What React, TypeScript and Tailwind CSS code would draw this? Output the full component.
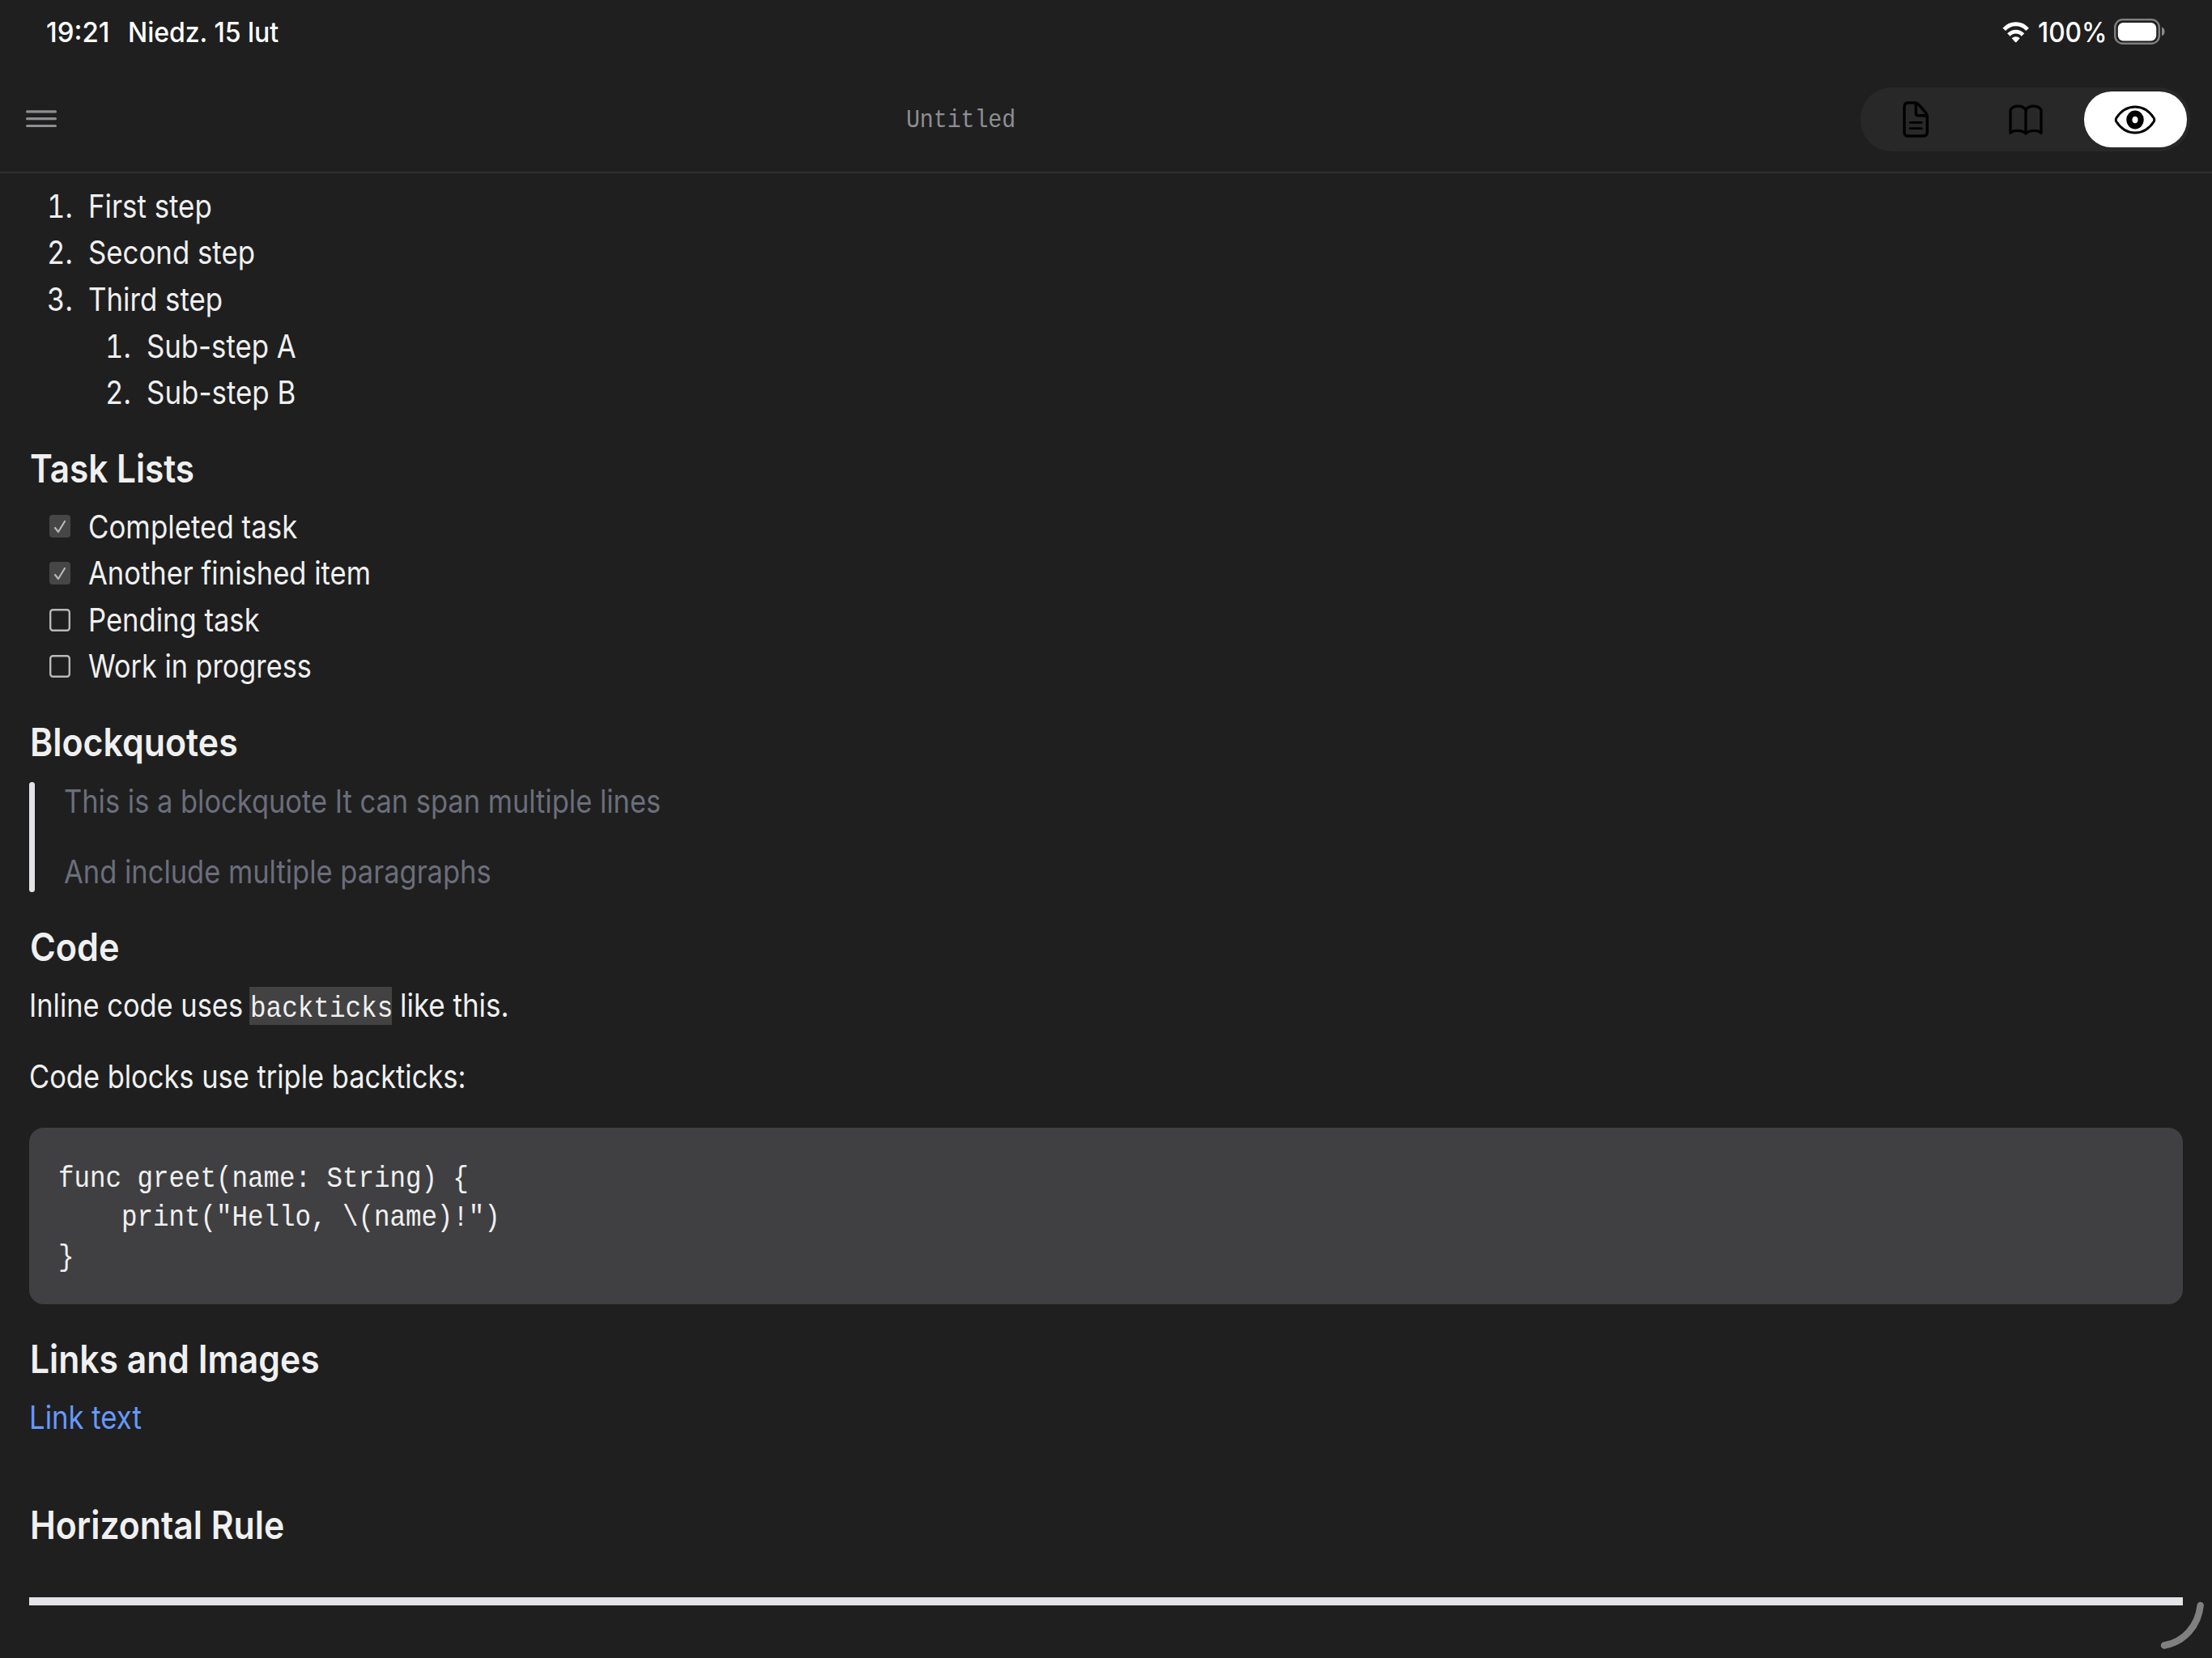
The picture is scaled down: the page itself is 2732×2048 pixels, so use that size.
import type { ReactNode } from "react";

/* Horizontally condensed run of text; the caller passes the scale class. */
function T({ className, children }: { className: string; children: ReactNode }) {
  return <span className={`inline-block origin-left whitespace-pre ${className}`}>{children}</span>;
}

function Heading({ className, scale, children }: { className: string; scale: string; children: ReactNode }) {
  return (
    <h2 className={`pl-[0.6px] text-[48px] leading-[58px] font-semibold ${className}`}>
      <T className={scale}>{children}</T>
    </h2>
  );
}

function Step({ n, scale, children }: { n: string; scale: string; children: ReactNode }) {
  return (
    <li className="flex h-[57.6px] items-center leading-[57.6px]">
      <span className="w-[50.8px] shrink-0 tabular-nums">
        <T className="scale-x-[0.885]">{n}</T>
      </span>
      <T className={scale}>{children}</T>
    </li>
  );
}

function Task({ done, scale, children }: { done?: boolean; scale: string; children: ReactNode }) {
  return (
    <li className="flex h-[57.6px] items-center leading-[57.6px]">
      <span className="mr-[22px] ml-[2.8px] flex shrink-0">
        {done ? (
          <svg width="26" height="28" viewBox="0 0 26 28" fill="none">
            <rect width="26" height="28" rx="4" fill="#464646" />
            <path d="M7 16l4 5L19 8" stroke="#b8b8b8" strokeWidth="2.2" strokeLinecap="round" strokeLinejoin="round" />
          </svg>
        ) : (
          <svg width="26" height="28" viewBox="0 0 26 28" fill="none">
            <rect x="1.2" y="1.2" width="23.6" height="25.6" rx="3.2" stroke="#b8b8b8" strokeWidth="2.4" />
          </svg>
        )}
      </span>
      <T className={scale}>{children}</T>
    </li>
  );
}

function StatusBar() {
  return (
    <div className="flex h-20 items-start pt-4 pl-[57px] text-[34px] leading-[48px] font-[450] text-white">
      <span className="w-[101px]">
        <T className="scale-x-[0.97]">19:21</T>
      </span>
      <T className="scale-x-[0.94]">Niedz. 15 lut</T>
      <div className="mr-[58px] ml-auto flex">
        <svg className="mt-[11px] mr-[10.5px]" width="34" height="26" viewBox="0 0 34 26" fill="none">
          <path d="M2.3 9.4C10.2 .6 23.2 .6 31.1 9.4" stroke="#fff" strokeWidth="5" />
          <path d="M7.9 16C12.7 10.8 20.7 10.8 25.5 16" stroke="#fff" strokeWidth="4.8" />
          <path d="M11.7 20.3C14.3 17.4 19.1 17.4 21.7 20.3L17.5 24.9Q16.7 25.6 15.9 24.9Z" fill="#fff" />
        </svg>
        <span className="w-[94px]">
          <T className="scale-x-[0.932]">100%</T>
        </span>
        <svg className="mt-[7px]" width="63" height="32" viewBox="0 0 63 32" fill="none">
          <rect x="1.2" y="1.2" width="54.6" height="29.6" rx="9.5" stroke="#7f7f7f" strokeWidth="2.4" />
          <rect x="4.8" y="5" width="47.4" height="22.4" rx="6.5" fill="#fff" />
          <path d="M59 10.5C63.8 12.3 63.8 19.7 59 21.5Z" fill="#8a8a8a" />
        </svg>
      </div>
    </div>
  );
}

function Toolbar() {
  return (
    <div className="flex h-[134px] border-b-2 border-[#2f2f2f] pr-[27px] pl-8">
      <svg className="mt-14 shrink-0" width="38" height="22" viewBox="0 0 38 22" stroke="#8e8e93" strokeWidth="3.2" strokeLinecap="round">
        <path d="M1.6 1.9H36.4M1.6 10.7H36.4M1.6 19.5H36.4" />
      </svg>
      <div className="flex-1 pt-[49px] pl-[6px] text-center font-['Liberation_Mono',monospace] text-[32px] leading-10 text-[#8e8e93]">
        <span className="inline-block scale-x-[0.88]">Untitled</span>
      </div>
      <div className="mt-7 flex h-[79px] w-[407px] shrink-0 items-center rounded-[38px] bg-[#282828]">
        <svg className="ml-[52px]" width="32" height="45" viewBox="0 0 32 45" fill="none" stroke="#000" strokeWidth="3.4" strokeLinecap="round" strokeLinejoin="round">
          <path d="M6.5 2H15Q18 2 20 4.3L28.3 14Q30.3 16.3 30.3 19V38Q30.3 43 25.5 43H6.5Q2 43 2 38V7Q2 2 6.5 2Z" />
          <path d="M16.3 2.5V14.5Q16.3 17.7 19.3 17.7H29.5" />
          <path d="M9 26.3H23.2M9 33.7H23.2" strokeWidth="2.8" />
        </svg>
        <svg className="ml-[99px]" width="42" height="38" viewBox="0 0 42 38" fill="none" stroke="#000" strokeWidth="3.3" strokeLinecap="round" strokeLinejoin="round">
          <path d="M21 7C18 .5 5 .5 2 7V35.3C6 31.4 16 31.4 21 36C26 31.4 36 31.4 40 35.3V7C37 .5 24 .5 21 7V36" />
        </svg>
        <div className="ml-[50.5px] flex h-[69px] w-[127px] items-center justify-center rounded-[34px] bg-white">
          <svg width="52" height="36" viewBox="0 0 52 36" fill="none" stroke="#000">
            <path d="M3 15.5C8 8 16 2 26 2S44 8 49 15.5Q50.5 18 49 20.5C44 28 36 34 26 34S8 28 3 20.5Q1.5 18 3 15.5Z" strokeWidth="3" />
            <ellipse cx="26" cy="18" rx="7.2" ry="7.9" strokeWidth="7.2" />
          </svg>
        </div>
      </div>
    </div>
  );
}

export default function App() {
  return (
    <div className="relative h-[2048px] w-[2732px] overflow-hidden bg-[#1f1f1f] font-[Inter,sans-serif] text-[39px] leading-[46px] text-[#f0f0f0]">
      <StatusBar />
      <Toolbar />
      <main className="px-9 pt-[11.8px]">
        <ol className="pl-[22.2px]">
          <Step n="1." scale="scale-x-[0.893]">First step</Step>
          <Step n="2." scale="scale-x-[0.892]">Second step</Step>
          <Step n="3." scale="scale-x-[0.892]">Third step</Step>
          <li>
            <ol className="pl-[72px]">
              <Step n="1." scale="scale-x-[0.891]">Sub-step A</Step>
              <Step n="2." scale="scale-x-[0.895]">Sub-step B</Step>
            </ol>
          </li>
        </ol>

        <Heading className="mt-9" scale="scale-x-[0.881]">Task Lists</Heading>
        <ul className="mt-[13.8px] pl-[22.2px]">
          <Task done scale="scale-x-[0.894]">Completed task</Task>
          <Task done scale="scale-x-[0.886]">Another finished item</Task>
          <Task scale="scale-x-[0.887]">Pending task</Task>
          <Task scale="scale-x-[0.878]">Work in progress</Task>
        </ul>

        <Heading className="mt-9" scale="scale-x-[0.893]">Blockquotes</Heading>
        <blockquote className="mt-[20.1px] flex h-[135.7px] text-[#6b6e7b]">
          <div className="w-[7px] rounded-full bg-[#e4e4e8]" />
          <div className="flex flex-col gap-[41px] pt-[0.7px] pl-[36px]">
            <p>
              <T className="scale-x-[0.883]">This is a blockquote It can span multiple lines</T>
            </p>
            <p>
              <T className="scale-x-[0.884]">And include multiple paragraphs</T>
            </p>
          </div>
        </blockquote>

        <Heading className="mt-[39px]" scale="scale-x-[0.898]">Code</Heading>
        <p className="mt-5 flex">
          <span className="w-[272px] pt-[0.7px]">
            <T className="scale-x-[0.882]">Inline code uses</T>
          </span>
          <code className="h-[47px] w-[176px] bg-[#424242] pt-[4.5px] pl-[0.6px] font-['Liberation_Mono',monospace] text-[37px] leading-[46px]">
            <T className="scale-x-[0.882]">backticks</T>
          </code>
          <span className="pt-[0.7px] pl-[9.6px]">
            <T className="scale-x-[0.896]">like this.</T>
          </span>
        </p>
        <p className="mt-[41px]">
          <T className="scale-x-[0.883]">Code blocks use triple backticks:</T>
        </p>
        <pre className="mt-[40.2px] h-[217.7px] rounded-[18px] bg-[#404042] pt-[38.6px] pl-[36.4px] font-['Liberation_Mono',monospace] text-[37px] leading-[48.5px]">
          <T className="scale-x-[0.878]">{'func greet(name: String) {\n    print("Hello, \\(name)!")\n}'}</T>
        </pre>

        <Heading className="mt-[39.2px]" scale="scale-x-[0.888]">Links and Images</Heading>
        <p className="mt-[20.3px] text-[#6699ff]">
          <a href="#link">
            <T className="scale-x-[0.89]">Link text</T>
          </a>
        </p>

        <Heading className="mt-[81px]" scale="scale-x-[0.89]">Horizontal Rule</Heading>
        <hr className="mt-[59.7px] h-2.5 border-0 bg-[#e4e4e8]" />
      </main>

      {/* Corner swipe indicator floating above the document */}
      <svg className="absolute right-0 bottom-0" width="72" height="78" viewBox="0 0 72 78" fill="none">
        <path d="M57.7 13C55 38 38 58 13 62.5" stroke="#808080" strokeWidth="8.4" strokeLinecap="round" />
      </svg>
    </div>
  );
}
